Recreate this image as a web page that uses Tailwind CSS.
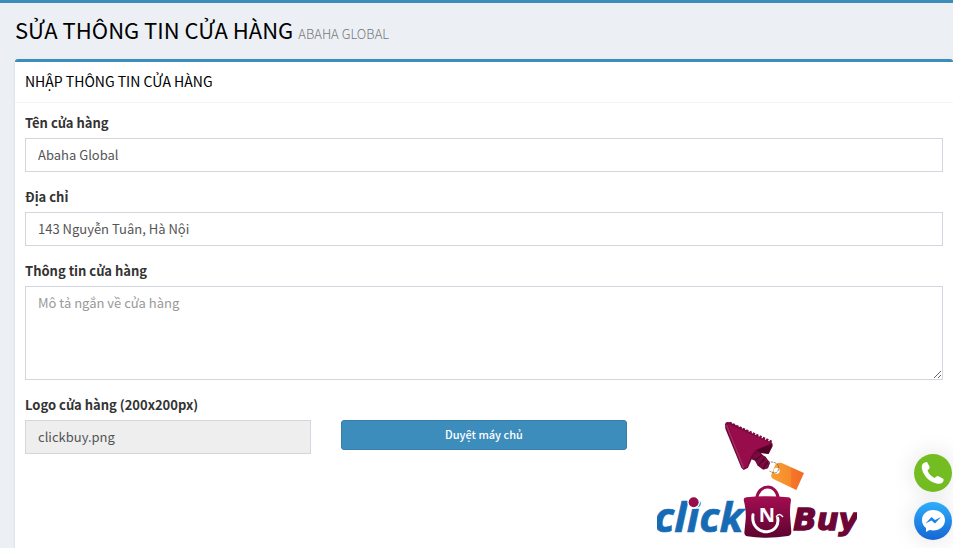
<!DOCTYPE html>
<html lang="vi">
<head>
    <meta charset="UTF-8">
    <meta name="viewport" content="width=device-width, initial-scale=1.0">
    <title>Sửa thông tin cửa hàng</title>
    <script src="https://cdn.jsdelivr.net/npm/@tailwindcss/browser@4"></script>
</head>
<body class="flex flex-col min-h-screen bg-[#ecf0f5] border-t-3 border-[#3c8dbc] font-['Noto_Sans_CJK_SC','Open_Sans',sans-serif] text-[13px] leading-5 text-[#333]">
    <!-- Page header -->
    <header class="flex items-baseline gap-[5px] px-[15px] pt-[12px] pb-[15px]">
        <h1 class="text-[22px] leading-7 text-black uppercase">Sửa thông tin cửa hàng</h1>
        <small class="text-[13px] leading-5 font-light text-[#777] uppercase">Abaha Global</small>
    </header>

    <!-- Store form -->
    <main class="grow ml-[15px] bg-white border-t-3 border-[#3c8dbc] rounded-t-[3px] shadow-sm">
        <div class="px-[10px] pt-[9px] pb-[11px] border-b border-[#f4f4f4]">
            <h2 class="text-[14px] leading-5 text-black uppercase">Nhập thông tin cửa hàng</h2>
        </div>
        <form class="p-[10px]">
            <div class="mb-[15px]">
                <label for="name" class="block mb-[5px] font-bold">Tên cửa hàng</label>
                <input type="text" id="name" value="Abaha Global" class="block w-full h-[34px] px-3 pb-[2px] border border-[#d2d6de] bg-white text-[#555]">
            </div>
            <div class="mb-[15px]">
                <label for="address" class="block mb-[5px] font-bold">Địa chỉ</label>
                <input type="text" id="address" value="143 Nguyễn Tuân, Hà Nội" class="block w-full h-[34px] px-3 pb-[2px] border border-[#d2d6de] bg-white text-[#555]">
            </div>
            <div class="mb-[15px]">
                <label for="info" class="block mb-[5px] font-bold">Thông tin cửa hàng</label>
                <textarea id="info" rows="4" placeholder="Mô tả ngắn về cửa hàng" class="block w-full px-3 py-[6px] border border-[#d2d6de] bg-white text-[#555] placeholder:text-[#999]"></textarea>
            </div>
            <div class="grid grid-cols-3 gap-[30px] items-start">
                <div>
                    <label for="logo" class="block mb-[5px] font-bold">Logo cửa hàng (200x200px)</label>
                    <input type="text" id="logo" value="clickbuy.png" readonly class="block w-full h-[34px] px-3 pb-[2px] border border-[#d2d6de] bg-[#eee] text-[#555]">
                </div>
                <button type="button" class="mt-[25px] h-[30px] pb-[2px] rounded-[3px] border border-[#367fa9] bg-[#3c8dbc] text-[11px] leading-4 font-medium text-white">Duyệt máy chủ</button>
                <svg class="w-[200px] h-[150px]" viewBox="21 -46 600 450" role="img" aria-label="click N Buy">
                    <defs>
                        <linearGradient id="bag" x1="0" y1="0" x2="0" y2="1">
                            <stop offset="0" stop-color="#a50d50"/>
                            <stop offset="1" stop-color="#5c0430"/>
                        </linearGradient>
                        <linearGradient id="tag" x1="0" y1="0" x2="1" y2="0">
                            <stop offset="0" stop-color="#f7a033"/>
                            <stop offset="0.6" stop-color="#f68a2c"/>
                            <stop offset="0.62" stop-color="#f4772a"/>
                            <stop offset="1" stop-color="#f26a25"/>
                        </linearGradient>
                    </defs>
                    <!-- arrow -->
                    <path d="M225 42 Q227 32 239 36 L367 98 L368 108 L356 131 L333 128 L339 135 L347 139 L360 159 L354 174 L340 178 L323 166 L315 151 L305 147 L294 172 L281 179 L274 172 L226 55Z" fill="#6f0738"/>
                    <path d="M232 38 L366 98 L318 118 L304 136 L291 169 L282 172Z" fill="#970d4b"/>
                    <path d="M238 38 L368 97" stroke="#7b0a3f" stroke-width="9" stroke-dasharray="7 4" fill="none"/>
                    <path d="M229 43 L281 174" stroke="#a92861" stroke-width="5" fill="none"/>
                    <path d="M367 101 L355 130 L330 126 L319 119Z" fill="#500326"/>
                    <path d="M309 134 L326 126 L359 154 L352 173 L336 175 L319 156Z" fill="#7c0a40"/>
                    <path d="M317 149 L333 136 M327 163 L343 146 M340 173 L354 153" stroke="#4e0326" stroke-width="4"/>
                    <!-- price tag -->
                    <path d="M377 162 Q384 155 395 158 L462 188 L439 239 L370 206 Q360 200 365 190Z" fill="url(#tag)"/>
                    <circle cx="380" cy="181" r="9" fill="#fff"/>
                    <path d="M354 157 Q369 151 383 162 Q390 177 380 186 Q370 190 357 181" stroke="#555" stroke-width="2" stroke-dasharray="7 2" fill="none"/>
                    <!-- bag -->
                    <path d="M320 266 C324 219 381 218 385 266" fill="none" stroke="#970d4b" stroke-width="9"/>
                    <path d="M281 268 Q281 262 289 261 Q352 254 414 261 Q423 262 423 270 Q418 301 421 325 L424 364 Q424 375 414 377 Q352 387 292 378 Q284 377 283 367 L287 327 Q289 300 281 268Z" fill="url(#bag)"/>
                    <path d="M309 313 C304 346 327 366 352 364 C375 362 387 344 383 323" fill="none" stroke="#fff" stroke-width="9" stroke-linecap="round"/>
                    <path d="M378 320 Q387 305 399 320" fill="none" stroke="#fff" stroke-width="4"/>
                    <text x="326" y="334" fill="#fff" class="font-['Open_Sans'] font-bold text-[60px]">N</text>
                    <!-- name -->
                    <text x="280" y="364" text-anchor="end" fill="#176bb5" stroke="#176bb5" stroke-width="2" class="font-['Open_Sans'] font-bold italic text-[126px]">click</text>
                    <circle cx="131" cy="276" r="19" fill="#fff"/>
                    <circle cx="131" cy="276" r="15" fill="#970d4b"/>
                    <text x="430" y="360" fill="#6d0636" stroke="#6d0636" stroke-width="4" class="font-['DejaVu_Sans'] font-bold italic text-[92px]">Buy</text>
                </svg>
            </div>
        </form>
    </main>

    <!-- Contact buttons -->
    <div class="fixed right-px bottom-2 flex flex-col gap-[10px]">
        <a href="#phone" aria-label="Phone" class="block size-[38px] rounded-full shadow-[0_0_24px_rgba(0,0,0,0.12)]">
            <svg class="size-full" viewBox="0 0 38 38">
                <circle cx="19" cy="19" r="19" fill="#73bd22"/>
                <path d="M9 9.500 Q10.500 8 13 8 L15.500 12.500 Q16 14 15 15 L13.500 16.500 Q15.500 21.500 20.500 24 L22.500 22.500 Q23.500 21.500 25 22.500 L29.500 25 Q30 27 28.500 28.500 Q26.500 30.500 22.500 29.500 C14.500 27.500 8.500 20.500 7.700 13.500 Q7.500 11 9 9.500Z" fill="#fff"/>
            </svg>
        </a>
        <a href="#messenger" aria-label="Messenger" class="block size-[38px] rounded-full shadow-[0_0_24px_rgba(0,0,0,0.12)]">
            <svg class="size-full" viewBox="0 0 38 38">
                <defs>
                    <linearGradient id="msg" x1="0" y1="0" x2="0" y2="1">
                        <stop offset="0" stop-color="#2fadfb"/>
                        <stop offset="1" stop-color="#1666d3"/>
                    </linearGradient>
                </defs>
                <circle cx="19" cy="19" r="19" fill="url(#msg)"/>
                <path d="M19 8 C12.500 8 8 12.500 8 18 C8 21.500 9.500 24 12 26 V30 L15.500 28 C24 30 31 25 31 18 C31 12.500 26 8 19 8Z" fill="#fff"/>
                <path d="M11.500 21.500 L17.500 15 L21 18 L27 15 L21 21.500 L17.500 18.500Z" fill="#1f83e6"/>
            </svg>
        </a>
    </div>
</body>
</html>
